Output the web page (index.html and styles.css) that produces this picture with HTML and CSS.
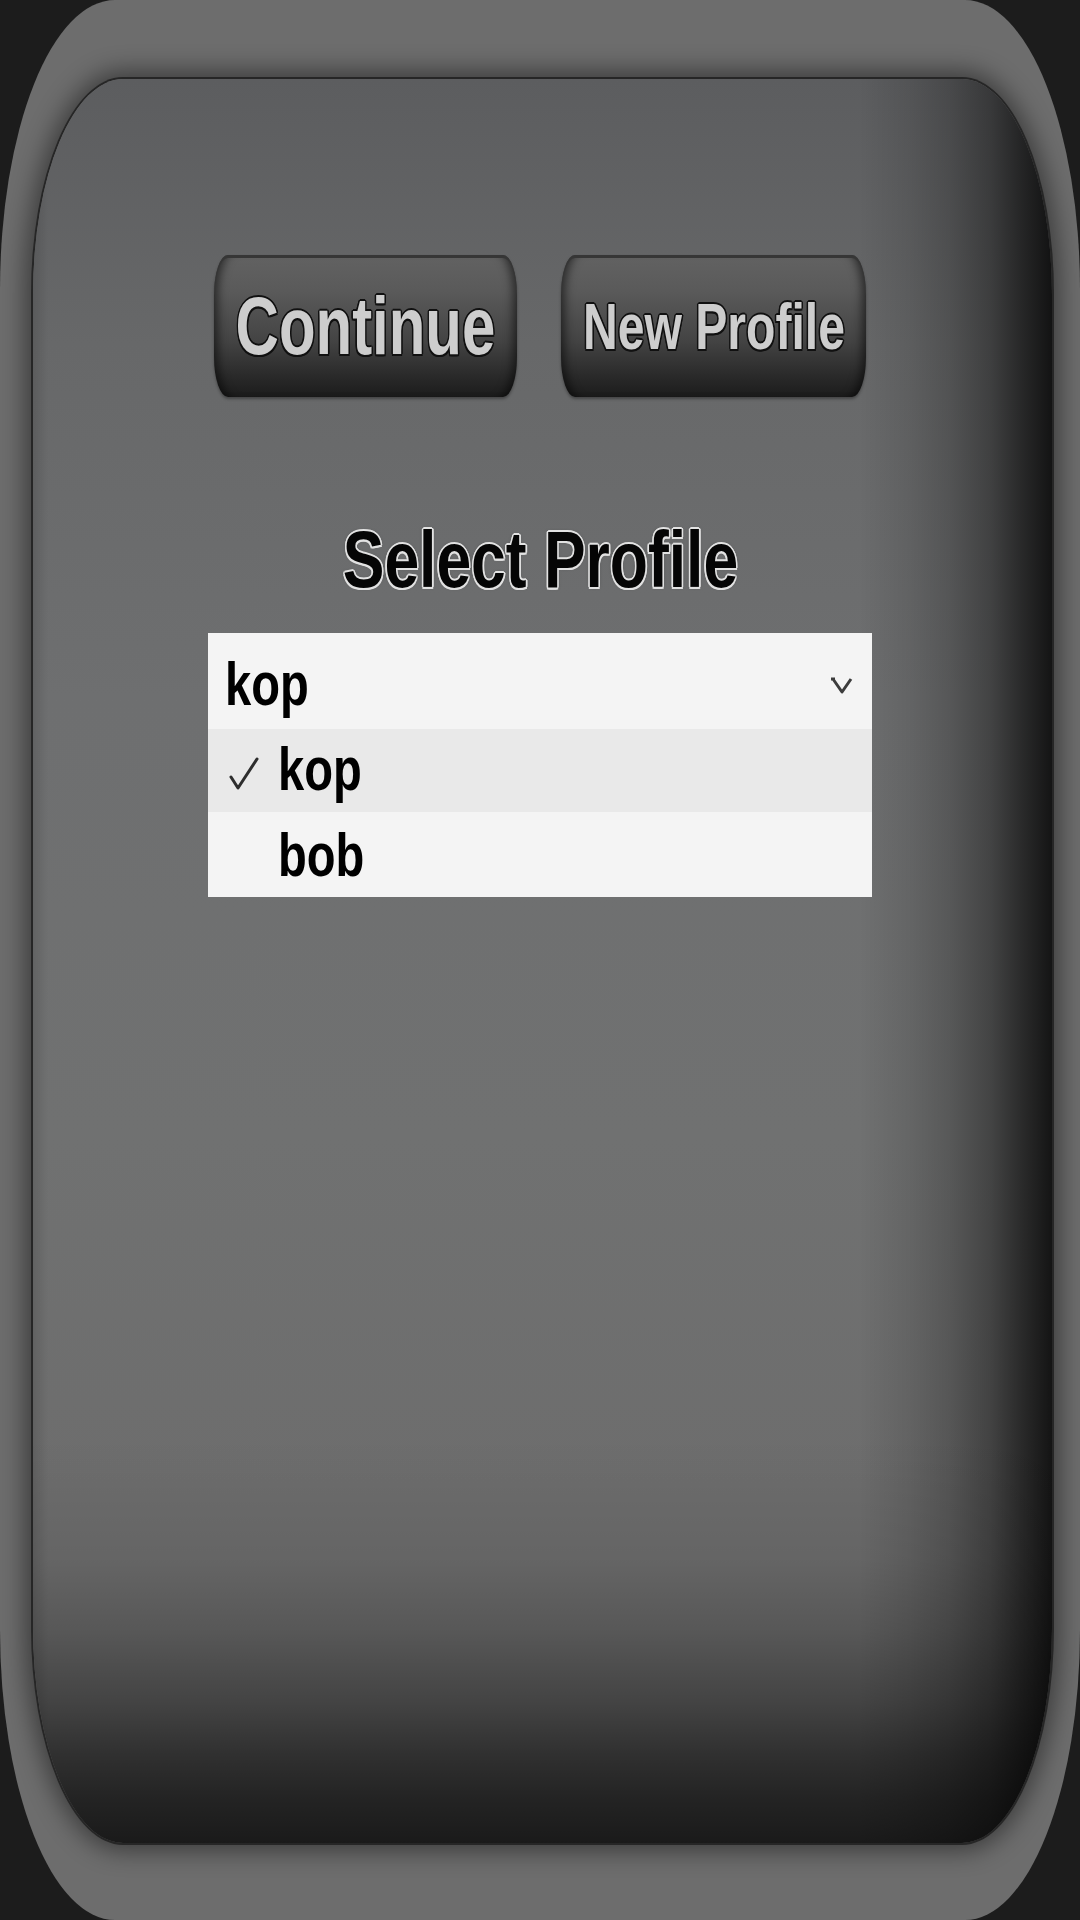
FILE: index.html
```html
<!DOCTYPE html>
<html lang="en">
<head>
    <meta charset="UTF-8">
    <meta name="viewport" content="width=device-width, initial-scale=1.0">
    <title>Select Profile</title>
    <link rel="stylesheet" href="styles.css">
</head>
<body>
    <div class="cadre">
        <div class="panneau">
            <div class="boutons">
                <div class="bouton continuer"><span>Continue</span></div>
                <div class="bouton nouveau"><span>New Profile</span></div>
            </div>

            <div class="titre"><span>Select Profile</span></div>

            <div class="liste">
                <div class="ligne entete">
                    <span class="nom">kop</span>
                    <svg class="chevron" width="24" height="17" viewBox="0 0 24 17">
                        <path d="M1 2 H5 M3 2 L12 15 L21 2" fill="none" stroke="#3c3c3c" stroke-width="3" stroke-linejoin="round"/>
                    </svg>
                </div>
                <div class="ligne choisi">
                    <span class="coche">
                        <svg width="32" height="37" viewBox="0 0 32 37">
                            <path d="M3 22 L10 33 L29 4" fill="none" stroke="#2e2e2e" stroke-width="3" stroke-linejoin="round" stroke-linecap="round"/>
                        </svg>
                    </span>
                    <span class="nom">kop</span>
                </div>
                <div class="ligne dernier">
                    <span class="coche"></span>
                    <span class="nom">bob</span>
                </div>
            </div>
        </div>
    </div>
</body>
</html>
```

FILE: styles.css
```css
body { margin: 0; background-color: #1c1c1c; font-family: "Liberation Sans", Arial, sans-serif; }

/* Cadre extérieur */
.cadre {
    width: 1080px;
    height: 1920px;
    box-sizing: border-box;
    padding: 79px 28px 77px 33px;
    display: flex;
    background: #6d6d6d;
    border-radius: 115px / 290px;
    overflow: hidden;
}

/* Panneau intérieur */
.panneau {
    flex: 1;
    display: flex;
    flex-direction: column;
    align-items: center;
    padding: 176px 5px 0 0;
    border-radius: 90px / 215px;
    box-shadow: 0 0 0 2px #262626, 0 0 24px 8px rgba(0, 0, 0, 0.45);
    background:
        linear-gradient(to bottom, rgba(0,0,0,0) 77%, rgba(0,0,0,0.08) 84%, rgba(0,0,0,0.2) 88%, rgba(0,0,0,0.38) 92%, rgba(0,0,0,0.56) 95%, rgba(0,0,0,0.68) 97.5%, rgba(0,0,0,0.76) 100%),
        linear-gradient(to right, rgba(0,0,0,0.12) 0, rgba(0,0,0,0) 1.5%, rgba(0,0,0,0) 81%, rgba(0,0,0,0.1) 86%, rgba(0,0,0,0.22) 90%, rgba(0,0,0,0.4) 94%, rgba(0,0,0,0.62) 97%, rgba(0,0,0,0.82) 100%),
        linear-gradient(to bottom, #5c5d5f 0%, #676869 15%, #6e6f70 35%, #707171 60%, #6d6d6d 80%);
}

/* Boutons du haut */
.boutons { display: flex; gap: 44px; }
.bouton {
    width: 303px;
    height: 142px;
    display: flex;
    align-items: center;
    justify-content: center;
    border-radius: 14px / 40px;
    background: linear-gradient(to bottom, #626262 0%, #5a5a5a 25%, #444 60%, #2a2a2a 85%, #1c1c1c 100%);
    box-shadow: inset 0 3px 0 #363636, inset 10px 0 10px -6px rgba(0,0,0,0.55), inset -10px 0 10px -6px rgba(0,0,0,0.55), 0 2px 3px rgba(0,0,0,0.35);
}
.nouveau { width: 305px; }
.bouton span {
    display: inline-block;
    font-weight: bold;
    line-height: 1;
    color: #cdcdcd;
    transform: scaleX(0.74);
    text-shadow: -2px 0 #111, 2px 0 #111, 0 -2px #111, 0 2px #111, -1.5px -1.5px #111, 1.5px -1.5px #111, -1.5px 1.5px #111, 1.5px 1.5px #111;
}
.continuer span { font-size: 81px; }
.nouveau span { font-size: 65px; white-space: nowrap; }

/* Titre */
.titre {
    margin-top: 123px;
    font-size: 80px;
    line-height: 80px;
    font-weight: bold;
    text-align: center;
}
.titre span {
    display: inline-block;
    color: #050505;
    white-space: nowrap;
    transform: scaleX(0.78);
    text-shadow: -2px 0 #e2e2e2, 2px 0 #e2e2e2, 0 -2px #e2e2e2, 0 2px #e2e2e2, -1.5px -1.5px #e2e2e2, 1.5px -1.5px #e2e2e2, -1.5px 1.5px #e2e2e2, 1.5px 1.5px #e2e2e2, 0 0 4px #444;
}

/* Liste déroulante */
.liste {
    width: 664px;
    margin-top: 33px;
    background: #f4f4f4;
}
.ligne {
    display: flex;
    box-sizing: border-box;
    padding: 0 18px 0 18px;
    font-size: 62px;
    line-height: 62px;
    font-weight: bold;
    color: #000;
}
.entete { height: 96px; padding-top: 20px; padding-left: 17px; }
.choisi { height: 83px; padding-top: 9px; background: #e9e9e9; }
.dernier { height: 85px; padding-top: 12px; }
.nom { display: inline-block; transform: scaleX(0.76); transform-origin: left center; }
.coche { width: 52px; flex: none; }
.coche svg { display: block; margin: 17px 0 0 2px; }
.chevron { margin: 24px 0 0 auto; }
```
